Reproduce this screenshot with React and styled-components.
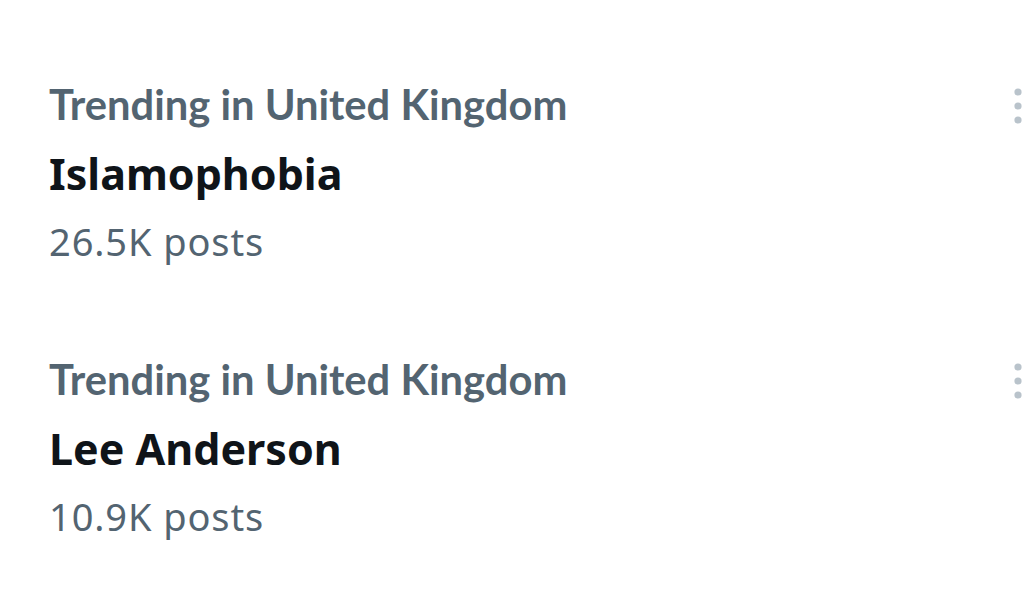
import React from "react";
import styled, { createGlobalStyle } from "styled-components";

const Global = createGlobalStyle`
  html, body { margin: 0; padding: 0; background: #ffffff; overflow: hidden; }
  body { width: 1024px; height: 612px; }
`;

const Page = styled.div`
  width: 1024px;
  height: 612px;
  box-sizing: border-box;
  padding: 72px 2px 0 49px;
  display: flex;
  flex-direction: column;
  gap: 76px;
  background: #ffffff;
`;

const Trend = styled.div`
  display: flex;
  justify-content: space-between;
  align-items: flex-start;
`;

const Info = styled.div`
  display: flex;
  flex-direction: column;
`;

const Context = styled.div`
  font-family: Lato, "Liberation Sans", sans-serif;
  font-weight: 700;
  font-size: 41.7px;
  line-height: 64px;
  color: #536471;
  white-space: nowrap;
`;

const Title = styled.div`
  font-family: "Noto Sans", "Liberation Sans", sans-serif;
  font-weight: 700;
  font-size: 43px;
  line-height: 75px;
  color: #0f1419;
  white-space: nowrap;
`;

const Count = styled.div`
  font-family: "Noto Sans", "Liberation Sans", sans-serif;
  font-weight: 400;
  font-size: 38px;
  letter-spacing: 0.9px;
  line-height: 60px;
  color: #536471;
  white-space: nowrap;
`;

const More = styled.button`
  margin-top: 16px;
  padding: 0;
  border: none;
  background: transparent;
  display: flex;
  width: 8px;
`;

const Dots = () => (
  <svg width="8" height="36" viewBox="0 0 8 36">
    <circle cx="4" cy="4" r="3.6" fill="#b9c3cb" />
    <circle cx="4" cy="18" r="3.6" fill="#b9c3cb" />
    <circle cx="4" cy="32" r="3.6" fill="#b9c3cb" />
  </svg>
);

const trends = [
  { context: "Trending in United Kingdom", title: "Islamophobia", count: "26.5K posts" },
  { context: "Trending in United Kingdom", title: "Lee Anderson", count: "10.9K posts" },
];

export default function App() {
  return (
    <>
      <Global />
      <Page>
        {trends.map((t) => (
          <Trend key={t.title}>
            <Info>
              <Context>{t.context}</Context>
              <Title>{t.title}</Title>
              <Count>{t.count}</Count>
            </Info>
            <More aria-label="More">
              <Dots />
            </More>
          </Trend>
        ))}
      </Page>
    </>
  );
}
